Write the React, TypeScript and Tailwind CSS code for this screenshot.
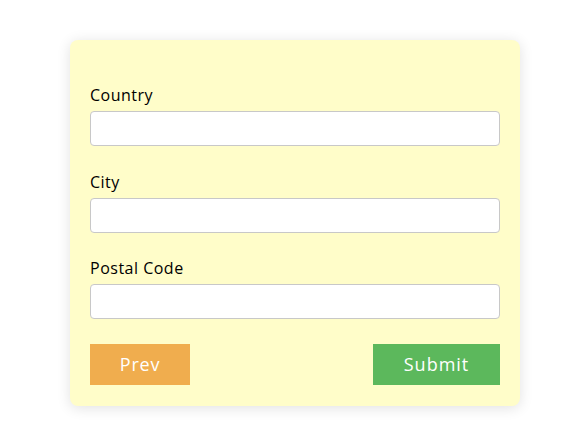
import React from 'react';

const fields = [
  { label: 'Country', gap: 'mb-6' },
  { label: 'City', gap: 'mb-[23px]' },
  { label: 'Postal Code', gap: 'mb-[25px]' },
];

export default function App() {
  return (
    <div
      className="min-h-[443px] w-[576px] bg-white pt-[40px] pl-[70px]"
      style={{ fontFamily: '"Open Sans", "DejaVu Sans", sans-serif' }}
    >
      <form className="w-[450px] rounded-lg bg-[#fffdc9] px-5 pt-[43px] pb-[21px] shadow-[0_2px_14px_rgba(0,0,0,0.12)]">
        {fields.map((f) => (
          <div key={f.label} className={`flex flex-col ${f.gap}`}>
            <label className="mb-1 h-6 text-[16px] leading-6 font-medium tracking-[0.5px] text-black">
              {f.label}
            </label>
            <input
              type="text"
              className="h-[35px] w-full rounded border border-[#c8c8c8] bg-white px-2 outline-none"
            />
          </div>
        ))}
        <div className="flex items-center justify-between">
          <button type="button" className="h-[41px] w-[100px] bg-[#f0ad4e] text-[18px] tracking-[0.8px] text-white">
            Prev
          </button>
          <button type="button" className="h-[41px] w-[127px] bg-[#5cb85c] text-[18px] tracking-[1px] text-white">
            Submit
          </button>
        </div>
      </form>
    </div>
  );
}
